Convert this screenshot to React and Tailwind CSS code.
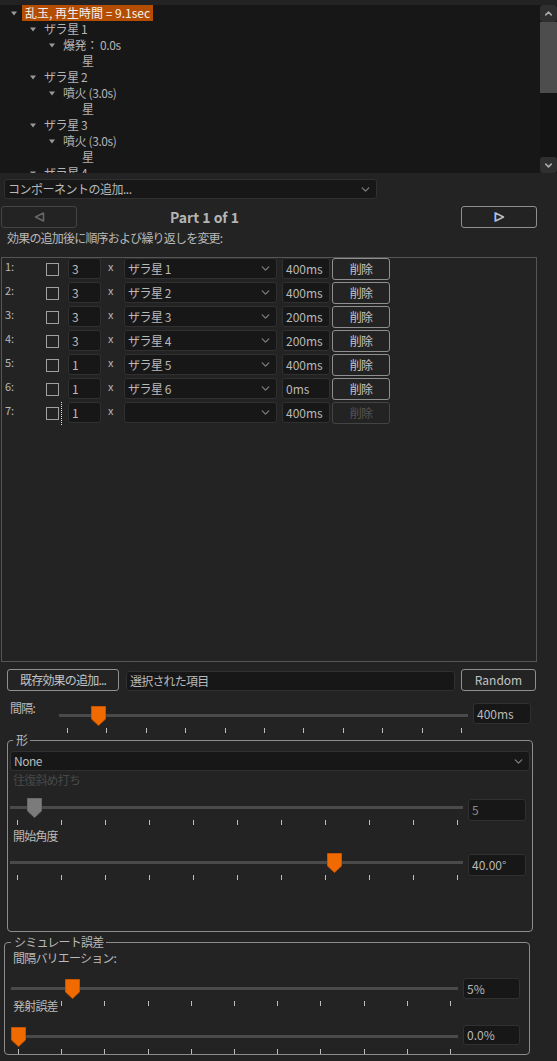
import React from 'react';
import { ChevronDown, ChevronUp } from 'lucide-react';

const JP = 'tracking-[-0.8px]';

const tree = [
  { lv: 0, arrow: true, text: '乱玉, 再生時間 = 9.1sec', sel: true },
  { lv: 1, arrow: true, text: 'ザラ星 1' },
  { lv: 2, arrow: true, text: '爆発： 0.0s' },
  { lv: 3, text: '星' },
  { lv: 1, arrow: true, text: 'ザラ星 2' },
  { lv: 2, arrow: true, text: '噴火 (3.0s)' },
  { lv: 3, text: '星' },
  { lv: 1, arrow: true, text: 'ザラ星 3' },
  { lv: 2, arrow: true, text: '噴火 (3.0s)' },
  { lv: 3, text: '星' },
  { lv: 1, arrow: true, text: 'ザラ星 4' },
];
const indent = ['pl-[11px]', 'pl-[30px]', 'pl-[49px]', 'pl-[68px]'];

const rows = [
  { n: 1, c: '3', name: 'ザラ星 1', ms: '400ms' },
  { n: 2, c: '3', name: 'ザラ星 2', ms: '400ms' },
  { n: 3, c: '3', name: 'ザラ星 3', ms: '200ms' },
  { n: 4, c: '3', name: 'ザラ星 4', ms: '200ms' },
  { n: 5, c: '1', name: 'ザラ星 5', ms: '400ms' },
  { n: 6, c: '1', name: 'ザラ星 6', ms: '0ms' },
  { n: 7, c: '1', name: '', ms: '400ms', off: true },
];

function Box({ className = '', children }) {
  return (
    <div className={'flex items-center bg-[#171717] border border-[#303030] rounded-[3px] pl-[3px] ' + className}>
      {children}
    </div>
  );
}

function Select({ className = '', children }) {
  return (
    <Box className={'justify-between pr-[4px] ' + className}>
      <span className="tracking-[-0.5px]">{children}</span>
      <ChevronDown size={13} strokeWidth={2.5} className="text-[#7a7a7a]" />
    </Box>
  );
}

function Btn({ className = '', children, off }) {
  return (
    <div
      className={
        'flex items-center justify-center border rounded-[3px] ' +
        (off ? 'border-[#444] text-[#555] ' : 'border-[#8f8f8f] text-[#c4c4c4] ') +
        className
      }
    >
      {children}
    </div>
  );
}

function Thumb({ gray }) {
  return (
    <svg width="15" height="20" viewBox="0 0 15 20">
      <polygon
        points="0.5,0.5 14.5,0.5 14.5,13 7.5,19.5 0.5,13"
        fill={gray ? '#7b7b7b' : '#f06a00'}
        stroke={gray ? '#6a6a6a' : '#c85400'}
      />
    </svg>
  );
}

function Slider({ className = '', pos, pad, gray }) {
  return (
    <div className={className}>
      <div className="relative h-[20px]">
        <div className="absolute left-0 right-0 top-[8px] h-[3px] bg-[#4a4a4a]" />
        <div className={'absolute top-0 ' + pos}>
          <Thumb gray={gray} />
        </div>
      </div>
      <div className={'mt-[2px] flex justify-between ' + pad}>
        {Array.from({ length: 11 }).map((_, i) => (
          <div key={i} className="w-px h-[5px] bg-[#bdbdbd]" />
        ))}
      </div>
    </div>
  );
}

function Arrow({ dir, dim }) {
  const pts = dir === 'left' ? '9.5,1 9.5,9 1.5,5' : '1.5,1 1.5,9 9.5,5';
  return (
    <svg width="11" height="10" viewBox="0 0 11 10">
      <polygon points={pts} fill="none" stroke={dim ? '#666' : '#bdbdbd'} strokeWidth="1.6" strokeLinejoin="round" />
      {!dim && <line x1="0.5" y1="0" x2="0.5" y2="10" stroke="#4a78c8" strokeWidth="1" />}
    </svg>
  );
}

export default function App() {
  return (
    <div className="w-[557px] h-[1061px] overflow-hidden bg-[#232323] text-[#b9b9b9] text-[12px] leading-[14px] [font-family:'Noto_Sans_CJK_JP','Noto_Sans',sans-serif] flex flex-col">
      <div className="h-[5px] shrink-0" />

      {/* tree view */}
      <div className="flex h-[168px] shrink-0">
        <div className="flex-1 bg-[#171717] overflow-hidden">
          {tree.map((t, i) => (
            <div key={i} className={'flex h-[16px] items-center ' + indent[t.lv]}>
              <span className="w-[11px] flex items-center">
                {t.arrow && (
                  <svg width="6" height="5" viewBox="0 0 6 5">
                    <polygon points="0,0.5 6,0.5 3,4.5" fill="#9a9a9a" />
                  </svg>
                )}
              </span>
              {t.sel ? (
                <span className="h-[16px] flex items-center px-[3px] bg-[#b54d00] text-[#f2f2f2]">{t.text}</span>
              ) : (
                <span className="ml-[3px] text-[#b4b4b4] tracking-[-0.4px]">{t.text}</span>
              )}
            </div>
          ))}
        </div>
        <div className="w-[17px] flex flex-col bg-[#141414]">
          <div className="h-[17px] bg-[#2f2f2f] rounded-[3px] flex items-center justify-center">
            <ChevronUp size={11} strokeWidth={3.5} className="text-[#a8a8a8]" />
          </div>
          <div className="h-[71px] bg-[#4d4d4d]" />
          <div className="flex-1" />
          <div className="h-[16px] bg-[#2f2f2f] rounded-[3px] flex items-center justify-center">
            <ChevronDown size={11} strokeWidth={3.5} className="text-[#a8a8a8]" />
          </div>
        </div>
      </div>

      <Select className="mt-[6px] ml-[4px] w-[373px] h-[20px] shrink-0">コンポーネントの追加...</Select>

      {/* part navigation */}
      <div className="mt-[7px] flex items-center h-[22px] shrink-0">
        <Btn off className="ml-[1px] w-[76px] h-[22px]">
          <Arrow dir="left" dim />
        </Btn>
        <div className="ml-[93px] text-[14px] font-bold text-[#b4b4b4]">Part 1 of 1</div>
        <div className="flex-1" />
        <Btn className="mr-[20px] w-[76px] h-[22px]">
          <Arrow dir="right" />
        </Btn>
      </div>

      <div className={'mt-[3px] ml-[7px] h-[14px] ' + JP}>効果の追加後に順序および繰り返しを変更:</div>

      {/* sequence panel */}
      <div className="mt-[12px] ml-[1px] w-[536px] h-[405px] shrink-0 border border-[#555] flex flex-col gap-[2px]">
        {rows.map((r) => (
          <div key={r.n} className="flex items-start h-[22px]">
            <div className="w-[44px] pl-[3px] mt-[2px] leading-[12px] text-[11px]">{r.n}:</div>
            <div className="w-[13px] h-[13px] mt-[5px] border border-[#a0a0a0]" />
            <div className="w-[9px]">
              {r.off && <div className="ml-[2px] w-0 h-[23px] border-l border-dotted border-[#e0e0e0]" />}
            </div>
            <Box className="w-[33px] h-[21px]">{r.c}</Box>
            <div className="ml-[7px] w-[16px] mt-[2px] leading-[12px] text-[11px]">x</div>
            <Select className="w-[153px] h-[21px]">{r.name}</Select>
            <Box className="ml-[5px] w-[48px] h-[21px]">{r.ms}</Box>
            <Btn off={r.off} className={'ml-[2px] w-[58px] h-[22px] ' + JP}>削除</Btn>
          </div>
        ))}
      </div>

      {/* bottom actions */}
      <div className="mt-[7px] flex items-start h-[22px] shrink-0">
        <Btn className={'ml-[7px] w-[112px] h-[22px] ' + JP}>既存効果の追加...</Btn>
        <Box className="ml-[7px] mt-[2px] w-[329px] h-[20px]">
          <span className={JP}>選択された項目</span>
        </Box>
        <Btn className="ml-[6px] w-[75px] h-[22px]">Random</Btn>
      </div>

      {/* interval */}
      <div className="mt-[11px] flex items-start shrink-0">
        <div className={'w-[59px] pl-[10px] leading-[12px] ' + JP}>間隔:</div>
        <Slider className="w-[409px] mt-[4px]" pos="left-[32px]" pad="pl-[8px] pr-[6px]" />
        <Box className="ml-[5px] mt-[1px] w-[58px] h-[21px]">400ms</Box>
      </div>

      {/* shape group */}
      <fieldset className="mt-[1px] ml-[7px] w-[526px] h-[198px] shrink-0 border border-[#8c8c8c] rounded-[4px]">
        <legend className={'ml-[5px] px-[3px] leading-[12px] ' + JP}>形</legend>
        <Select className="mt-[5px] ml-[2px] w-[520px] h-[20px]">None</Select>
        <div className={'mt-[3px] ml-[5px] leading-[12px] text-[#474747] ' + JP}>往復斜め打ち</div>
        <div className="mt-[12px] flex items-start">
          <Slider className="ml-[2px] w-[453px]" pos="left-[17px]" pad="pl-[7px] pr-[5px]" gray />
          <Box className="ml-[5px] mt-[1px] w-[58px] h-[22px] text-[#8a8a8a]">5</Box>
        </div>
        <div className={'mt-[5px] ml-[5px] leading-[12px] ' + JP}>開始角度</div>
        <div className="mt-[11px] flex items-start">
          <Slider className="ml-[2px] w-[453px]" pos="left-[317px]" pad="pl-[7px] pr-[5px]" />
          <Box className="ml-[5px] mt-[1px] w-[58px] h-[22px]">40.00°</Box>
        </div>
      </fieldset>

      {/* simulate error group */}
      <fieldset className="mt-[4px] ml-[4px] w-[526px] h-[119px] shrink-0 border border-[#8c8c8c] rounded-[4px]">
        <legend className={'ml-[6px] px-[3px] leading-[12px] ' + JP}>シミュレート誤差</legend>
        <div className={'mt-[4px] ml-[8px] leading-[12px] ' + JP}>間隔バリエーション:</div>
        <div className="mt-[14px] flex items-start">
          <Slider className="ml-[6px] mt-[1px] w-[447px]" pos="left-[54px]" pad="pl-[7px] pr-[7px]" />
          <Box className="ml-[5px] w-[57px] h-[21px]">5%</Box>
        </div>
        <div className="-mt-[6px] ml-[8px] leading-[12px] relative">
          <span className={'bg-[#232323] ' + JP}>発射誤差</span>
        </div>
        <div className="mt-[13px] flex items-start">
          <Slider className="ml-[6px] mt-[2px] w-[447px]" pos="left-0" pad="pl-[7px] pr-[7px]" />
          <Box className="ml-[5px] w-[57px] h-[20px]">0.0%</Box>
        </div>
      </fieldset>
    </div>
  );
}
